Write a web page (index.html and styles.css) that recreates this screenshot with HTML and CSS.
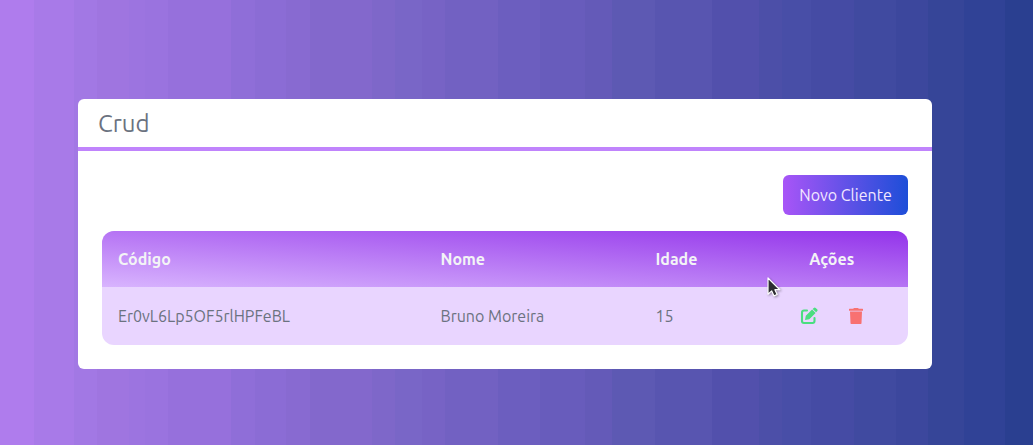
FILE: index.html
```html
<!DOCTYPE html>
<html lang="pt-BR">
<head>
<meta charset="utf-8">
<title>Crud</title>
<link rel="stylesheet" href="styles.css">
</head>
<body>
<main class="card">
  <h1 class="card-title"><span>Crud</span></h1>
  <div class="card-body">
    <button class="new-button" type="button">Novo Cliente</button>
    <table class="clients">
      <colgroup><col class="col-code"><col class="col-name"><col class="col-age"><col class="col-actions"></colgroup>
      <thead>
        <tr><th>Código</th><th>Nome</th><th>Idade</th><th class="h-actions">Ações</th></tr>
      </thead>
      <tbody>
        <tr>
          <td>Er0vL6Lp5OF5rlHPFeBL</td><td>Bruno Moreira</td><td>15</td>
          <td><div class="actions">
            <svg class="edit" viewBox="0 0 18 18" aria-label="Editar"><path d="M7 3.500H4Q2 3.500 2 5.500v8.500q0 2 2 2h8.500q2 0 2-2v-3" fill="none" stroke="currentColor" stroke-width="2.100" stroke-linecap="round"/><path d="M5 13l.8-4.200 6.300-6.300 3.500 3.500-6.300 6.300zM12.700 1.900l1-1q1-1 2 0l1.400 1.400q1 1 0 2l-1 1z" fill="currentColor"/></svg>
            <svg class="trash" viewBox="0 0 14 16" aria-label="Excluir"><path d="M4.200.8Q4.500 0 5.300 0h3.400q.8 0 1.100.8H13.500q.5 0 .5.500V2.800H0V1.300q0-.5.5-.5zM1 3.500h12l-.5 11.800q0 .7-.7.700H2.200q-.7 0-.7-.7z" fill="currentColor"/></svg>
          </div></td>
        </tr>
      </tbody>
    </table>
  </div>
</main>
<svg class="cursor" viewBox="0 0 14 22" aria-hidden="true"><path d="M1 1v16.200l3.700-3.300 2.300 5 3.200-1.400-2.300-4.800h4.900z" fill="#2d2d31" stroke="#fff" stroke-width="1.2" stroke-linejoin="round"/></svg>
</body>
</html>
```
FILE: styles.css
```css
* { box-sizing: border-box; }
body {
  margin: 0;
  height: 445px;
  padding: 99px 101px 76px 78px;
  overflow: hidden;
  background: linear-gradient(to right,
    #af7ced 0 34px, #a87ae8 34px 74px, #a278e4 74px 97px, #9f75e0 97px 129px,
    #9c74e0 129px 145px, #9a73df 145px 168px, #9670dc 168px 231px, #8f6ed8 231px 255px,
    #8b6cd5 255px 286px, #886ad1 286px 310px, #8368cc 310px 372px, #7e67c9 372px 395px,
    #7966c7 395px 422px, #7763c5 422px 445px, #7261c2 445px 498px, #6c5ebf 498px 540px,
    #685cbc 540px 585px, #645ab8 585px 612px, #5d59b3 612px 655px, #5855b0 655px 712px,
    #5250ac 712px 759px, #4c4fa8 759px 782px, #484ea7 782px 811px, #454ba4 811px 854px,
    #404aa0 854px 896px, #3c479d 896px 928px, #364598 928px 964px, #304296 964px 1005px,
    #2a3f90 1005px);
  font-family: Ubuntu, "Noto Sans", sans-serif;
  font-size: 16px;
  line-height: 24px;
  color: #6b7280;
}
.card { height: 270px; background: #fff; border-radius: 6px; overflow: hidden; }
.card-title {
  margin: 0;
  height: 52px;
  padding: 9px 20px 7px;
  border-bottom: 4px solid #c084fc;
  font-size: 24px;
  line-height: 32px;
  font-weight: 400;
}
.card-body { display: flex; flex-direction: column; padding: 24px; }
.new-button {
  align-self: flex-end;
  width: 125px;
  height: 40px;
  margin-bottom: 16px;
  padding: 0;
  border: 0;
  border-radius: 6px;
  background: linear-gradient(to right, #a855f7, #1d4ed8);
  color: #f3e8ff;
  font: 400 16px/24px Ubuntu, "Noto Sans", sans-serif;
}
.clients {
  width: 806px;
  table-layout: fixed;
  border-collapse: collapse;
  border-radius: 12px;
  overflow: hidden;
  background: #e9d5ff;
}
.clients thead { background: linear-gradient(to top right, #d8b4fe, #9333ea); color: #f3f4f6; }
.col-code { width: 322.5px; }
.col-name { width: 215px; }
.col-age { width: 121px; }
.clients th, .clients td { padding: 0 16px; text-align: left; white-space: nowrap; }
.clients th { height: 56px; font-weight: 600; }
.clients td { height: 58px; }
.clients .h-actions { padding: 0 18px 0 13px; text-align: center; }
.actions { display: flex; align-items: center; gap: 31px; padding-left: 23px; }
.edit { width: 18px; height: 18px; color: #4ade80; }
.trash { width: 14px; height: 16px; color: #f87171; }
.cursor { position: absolute; left: 767px; top: 277px; width: 14px; height: 22px; filter: drop-shadow(1px 1px 1px rgba(0, 0, 0, .35)); }
```
